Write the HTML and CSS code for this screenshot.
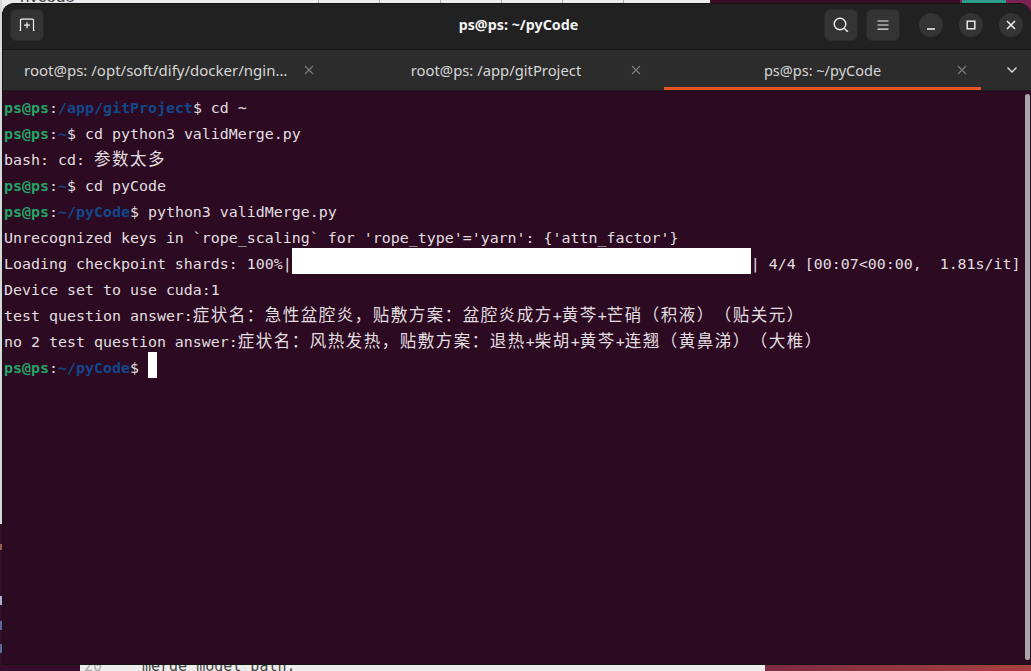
FILE: index.html
```html
<!DOCTYPE html>
<html lang="zh-CN">
<head>
<meta charset="utf-8">
<title>ps@ps: ~/pyCode</title>
<link rel="stylesheet" href="styles.css">
</head>
<body>
<div class="desktop">
  <div class="bg bg-top">
    <span class="bg-word">nvcode</span>
    <span class="bg-ticks"><i></i><i></i><i></i><i></i><i></i><i></i></span>
  </div>
  <div class="bg bg-top-dark"></div>
  <div class="bg bg-top-pink"></div>
  <div class="bg bg-teal"></div>
  <div class="bg bg-left"></div>
  <div class="bg bg-left-dark">
    <span class="mark mark-red"></span>
    <span class="mark mark-a"></span>
    <span class="mark mark-b"></span>
    <span class="mark mark-c"></span>
  </div>
  <div class="bg bg-bottom-dark"></div>
  <div class="bg bg-bottom-doc"><span class="bg-num">20</span><span class="bg-code">merge_model_path,</span></div>
  <div class="bg bg-bottom-red"></div>

  <main class="window">
    <header class="titlebar">
      <div class="bar-start">
        <button class="btn" aria-label="新建标签">
          <svg width="18" height="16" viewBox="0 0 18 16"><path d="M1.5 13.5h1V3.2q0-1 1-1h11q1 0 1 1v10.3h1" fill="none" stroke="#f0f0f0" stroke-width="1.2"/><path d="M9 5.2v6M6 8.2h6" fill="none" stroke="#f0f0f0" stroke-width="1.3"/></svg>
        </button>
      </div>
      <h1 class="title">ps@ps: ~/pyCode</h1>
      <div class="bar-end">
        <div class="actions">
          <button class="btn" aria-label="搜索">
            <svg width="18" height="18" viewBox="0 0 18 18"><circle cx="8" cy="8" r="5.8" fill="none" stroke="#eee" stroke-width="1.4"/><path d="M12.2 12.2l3.6 3.6" stroke="#eee" stroke-width="1.6" fill="none"/></svg>
          </button>
          <button class="btn" aria-label="菜单">
            <svg width="14" height="14" viewBox="0 0 14 14"><path d="M1.5 3h11M1.5 7h11M1.5 11.2h11" stroke="#eee" stroke-width="1.2" fill="none"/></svg>
          </button>
        </div>
        <div class="controls">
          <button class="ctl" aria-label="最小化"><svg width="12" height="12" viewBox="0 0 12 12"><path d="M2 10h8" stroke="#f2f2f2" stroke-width="1.3" fill="none"/></svg></button>
          <button class="ctl" aria-label="最大化"><svg width="12" height="12" viewBox="0 0 12 12"><rect x="2.2" y="2.2" width="7.6" height="7.6" fill="none" stroke="#f2f2f2" stroke-width="1.4"/></svg></button>
          <button class="ctl" aria-label="关闭"><svg width="12" height="12" viewBox="0 0 12 12"><path d="M2 2l8 8M10 2l-8 8" stroke="#f2f2f2" stroke-width="1.5" fill="none"/></svg></button>
        </div>
      </div>
    </header>

    <nav class="tabbar">
      <div class="tab"><span class="tab-title tab-title-long">root@ps: /opt/soft/dify/docker/ngin…</span>
        <svg class="tab-x" width="10" height="10" viewBox="0 0 10 10"><path d="M1 1l8 8M9 1l-8 8" stroke="#7d7d7d" stroke-width="1.1" fill="none"/></svg></div>
      <div class="tab"><span class="tab-title">root@ps: /app/gitProject</span>
        <svg class="tab-x" width="10" height="10" viewBox="0 0 10 10"><path d="M1 1l8 8M9 1l-8 8" stroke="#7d7d7d" stroke-width="1.1" fill="none"/></svg></div>
      <div class="tab tab-active"><span class="tab-title tab-title-short">ps@ps: ~/pyCode</span>
        <svg class="tab-x" width="10" height="10" viewBox="0 0 10 10"><path d="M1 1l8 8M9 1l-8 8" stroke="#7d7d7d" stroke-width="1.1" fill="none"/></svg></div>
      <svg class="chevron" width="12" height="8" viewBox="0 0 12 8"><path d="M1.5 1.5L6 6l4.5-4.5" stroke="#e0e0e0" stroke-width="1.3" fill="none"/></svg>
    </nav>

    <section class="terminal">
      <div class="line"><b class="g">ps@ps</b>:<b class="u">/app/gitProject</b>$ cd ~</div>
      <div class="line"><b class="g">ps@ps</b>:<b class="u">~</b>$ cd python3 validMerge.py</div>
      <div class="line">bash: cd: <span class="cjk">参数太多</span></div>
      <div class="line"><b class="g">ps@ps</b>:<b class="u">~</b>$ cd pyCode</div>
      <div class="line"><b class="g">ps@ps</b>:<b class="u">~/pyCode</b>$ python3 validMerge.py</div>
      <div class="line">Unrecognized keys in `rope_scaling` for 'rope_type'='yarn': {'attn_factor'}</div>
      <div class="line">Loading checkpoint shards: 100%|<span class="bar"></span>| 4/4 [00:07&lt;00:00,  1.81s/it]</div>
      <div class="line">Device set to use cuda:1</div>
      <div class="line">test question answer:<span class="cjk">症状名：急性盆腔炎，贴敷方案：盆腔炎成方</span>+<span class="cjk">黄芩</span>+<span class="cjk">芒硝（积液）（贴关元）</span></div>
      <div class="line">no 2 test question answer:<span class="cjk">症状名：风热发热，贴敷方案：退热</span>+<span class="cjk">柴胡</span>+<span class="cjk">黄芩</span>+<span class="cjk">连翘（黄鼻涕）（大椎）</span></div>
      <div class="line"><b class="g">ps@ps</b>:<b class="u">~/pyCode</b>$ <span class="cursor"></span></div>
      <div class="scrollbar"></div>
    </section>
  </main>
</div>
</body>
</html>
```

FILE: styles.css
```css
* { box-sizing: border-box; }
html, body { margin: 0; padding: 0; height: 100%; overflow: hidden; }
body { background: #2c0a21; }

.desktop { position: relative; width: 1031px; height: 671px; overflow: hidden; }

/* Desktop content peeking out behind the terminal window */
.bg { position: absolute; overflow: hidden; }
.bg-top { left: 0; top: 0; width: 710px; height: 12px; background: #ececec; }
.bg-word { position: absolute; left: 20px; top: -11px; font: 17px/15px "Liberation Sans", sans-serif; color: #444; }
.bg-ticks { position: absolute; left: 318px; top: 0; display: flex; gap: 60px; }
.bg-ticks i { width: 1px; height: 4px; background: #aaa; }
.bg-top-dark { left: 710px; top: 0; width: 250px; height: 12px; background: #3d0b2a; }
.bg-top-pink { left: 960px; top: 0; width: 71px; height: 12px; background: #7a2350; }
.bg-teal { left: 962px; top: 0; width: 44px; height: 4px; background: #2f9c8c; }
.bg-left { left: 0; top: 0; width: 2px; height: 524px; background: #d9d9d9; }
.bg-left-dark { left: 0; top: 524px; width: 2px; height: 147px; background: #3a0c2c; }
.mark { position: absolute; left: 0; width: 2px; }
.mark-red { top: 20px; height: 6px; background: #a05a50; }
.mark-a { top: 72px; height: 9px; background: #aab0d0; }
.mark-b { top: 97px; height: 9px; background: #5a6aa0; }
.mark-c { top: 120px; height: 9px; background: #5a6aa0; }
.bg-bottom-dark { left: 0; top: 660px; width: 80px; height: 11px; background: #3a0c2c; }
.bg-bottom-doc { left: 80px; top: 660px; width: 685px; height: 11px; background: #ececec; font: 15px/16px "DejaVu Sans Mono", monospace; color: #444; }
.bg-num { position: absolute; left: 4px; top: -2px; color: #aaa; }
.bg-code { position: absolute; left: 62px; top: -2px; }
.bg-bottom-red { left: 765px; top: 660px; width: 266px; height: 11px; background: linear-gradient(90deg, #7d2a42, #a8413f); }

/* Window */
.window {
  position: absolute; left: 2px; top: 3px; width: 1029px; height: 662px;
  display: flex; flex-direction: column;
  border-radius: 12px 12px 0 0;
  border: 1px solid #141414; border-right: 0;
  overflow: hidden;
  background: #2c0a21;
}

.titlebar {
  flex: 0 0 46px; display: grid; grid-template-columns: 1fr auto 1fr; align-items: center;
  padding: 0 8px 3px 7px;
  background: #212121;
  border-bottom: 1px solid #171717;
}
.bar-start { display: flex; }
.bar-end { display: flex; justify-content: flex-end; align-items: center; }
.btn {
  width: 34px; height: 32px; padding: 0;
  display: flex; align-items: center; justify-content: center;
  background: #343434; border: 1px solid #2a2a2a; border-radius: 6px;
}
.title {
  margin: 0 0 0 4px; text-align: center;
  font: 700 14.3px/20px "Noto Sans", sans-serif; color: #f2f2f2;
}
.actions { display: flex; gap: 8px; margin-right: 19px; }
.controls { display: flex; gap: 16px; }
.ctl {
  width: 24px; height: 24px; padding: 0; border: 0; border-radius: 50%;
  display: flex; align-items: center; justify-content: center;
  background: #343434;
}

.tabbar {
  flex: 0 0 41px; display: flex; gap: 9.5px; padding-left: 8px;
  background: #2c2c2c;
  border-bottom: 1px solid #1c1c1c;
}
.tab {
  width: 317px; display: grid; grid-template-columns: 24px 1fr 24px;
  align-items: center; padding: 0 7px;
  font: 14.8px/20px "Noto Sans", sans-serif; color: #d6d6d6;
}
.tab-title { grid-column: 2; text-align: center; white-space: nowrap; }
.tab-title-long { text-align: left; margin-left: -18px; font-size: 15px; }
.tab-title-short { font-size: 14.5px; }
.tab-x { grid-column: 3; justify-self: center; }
.tab-active { box-shadow: inset 0 -3px 0 #e95420; }
.chevron { align-self: center; margin-left: 15px; }

/* Terminal */
.terminal {
  flex: 1; position: relative; min-height: 0;
  padding: 1px 0 0 1px;
  background: #2c0a21;
  font-family: "DejaVu Sans Mono", "Noto Sans CJK SC", monospace;
  font-size: 14.95px; line-height: 32px; color: #e2dfe0;
}
.line { height: 26px; white-space: pre; }
.g { font-weight: 700; color: #26a269; }
.u { font-weight: 700; color: #12488b; }
.cjk { font-family: "Noto Sans CJK SC", sans-serif; font-size: 16.5px; line-height: 0; letter-spacing: 1.5px; text-spacing-trim: space-all; }
.bar { display: inline-block; width: 459px; height: 26px; background: #fff; vertical-align: top; }
.cursor { display: inline-block; width: 9px; height: 26px; background: #fff; vertical-align: top; }
.scrollbar {
  position: absolute; right: 1px; top: 3px; bottom: 4px; width: 5px;
  background: #a9a7a9; border-radius: 3px;
}
```
